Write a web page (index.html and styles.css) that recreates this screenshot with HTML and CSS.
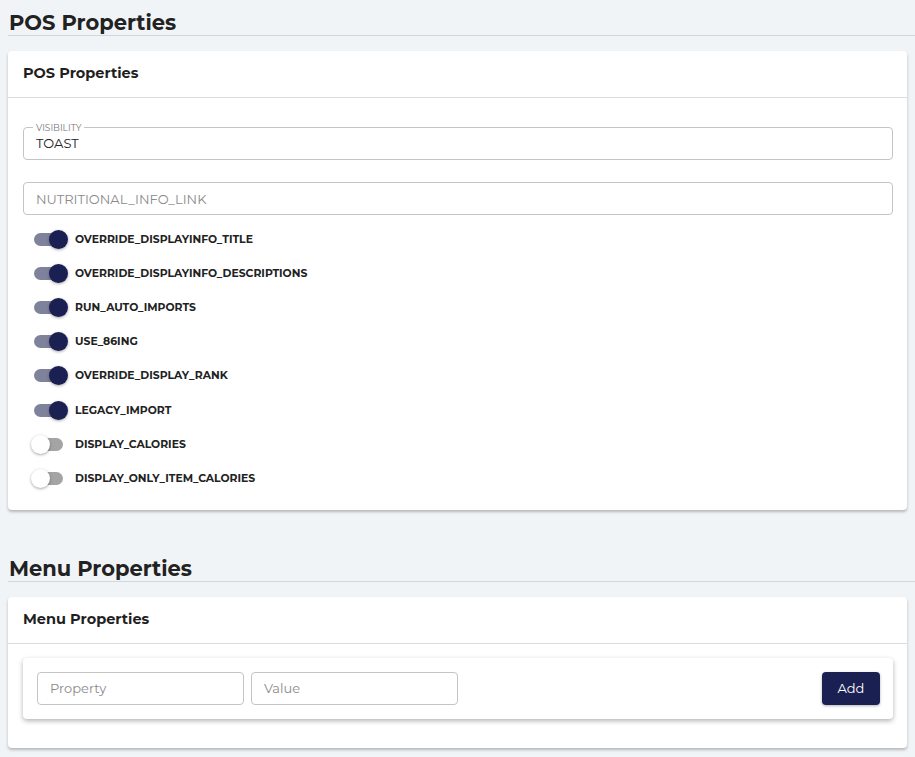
FILE: index.html
```html
<!DOCTYPE html>
<html lang="en">
<head>
  <meta charset="UTF-8">
  <meta name="viewport" content="width=device-width, initial-scale=1.0">
  <title>Properties</title>
  <link rel="stylesheet" href="styles.css">
</head>
<body>
  <!-- POS properties -->
  <section class="section">
    <h2 class="section-title">POS Properties</h2>
    <div class="card">
      <div class="card-header">POS Properties</div>
      <div class="card-body">
        <fieldset class="field">
          <legend>VISIBILITY</legend>
          <input type="text" value="TOAST" readonly>
        </fieldset>
        <div class="field plain">
          <input type="text" placeholder="NUTRITIONAL_INFO_LINK">
        </div>

        <ul class="switch-list">
          <li><span class="switch on"></span>OVERRIDE_DISPLAYINFO_TITLE</li>
          <li><span class="switch on"></span>OVERRIDE_DISPLAYINFO_DESCRIPTIONS</li>
          <li><span class="switch on"></span>RUN_AUTO_IMPORTS</li>
          <li><span class="switch on"></span>USE_86ING</li>
          <li><span class="switch on"></span>OVERRIDE_DISPLAY_RANK</li>
          <li><span class="switch on"></span>LEGACY_IMPORT</li>
          <li><span class="switch"></span>DISPLAY_CALORIES</li>
          <li><span class="switch"></span>DISPLAY_ONLY_ITEM_CALORIES</li>
        </ul>
      </div>
    </div>
  </section>

  <!-- Menu properties -->
  <section class="section">
    <h2 class="section-title">Menu Properties</h2>
    <div class="card">
      <div class="card-header">Menu Properties</div>
      <div class="card-body menu-body">
        <div class="add-row">
          <input class="small-input" type="text" placeholder="Property">
          <input class="small-input" type="text" placeholder="Value">
          <button class="btn-add">Add</button>
        </div>
      </div>
    </div>
  </section>
</body>
</html>
```

FILE: styles.css
```css
body {
  margin: 0;
  padding: 0 0 0 8px;
  background-color: #f1f4f7;
  font-family: Montserrat, "DejaVu Sans", sans-serif;
  color: #1f1f1f;
  overflow: hidden;
}
.section {
  margin-bottom: 36px;
}
.section-title {
  margin: 0;
  padding: 12px 0 1px 1px;
  font-size: 21px;
  font-weight: 700;
  line-height: 22px;
  color: #222;
  border-bottom: 1px solid #d3d7db;
}
.card {
  width: 899px;
  margin-top: 15px;
  background: #fff;
  border-radius: 4px;
  box-shadow: 0 2px 3px rgba(0, 0, 0, 0.25);
}
.card-header {
  padding: 13px 15px 15px;
  font-size: 14.5px;
  font-weight: 700;
  line-height: 18px;
  border-bottom: 1px solid #dcdcdc;
}
.card-body {
  padding: 25px 14px 14px 15px;
}

/* outlined text fields */
.field {
  margin: 0;
  padding: 0 12px;
  height: 37px;
  box-sizing: border-box;
  border: 1px solid #c4c4c4;
  border-radius: 4px;
}
.field legend {
  padding: 0 3px;
  margin-left: -3px;
  font-size: 9px;
  line-height: 9px;
  color: #777;
}
.field input {
  width: 100%;
  border: none;
  outline: none;
  padding: 0;
  font-family: inherit;
  font-size: 13px;
  color: #222;
  background: transparent;
  margin-top: 3px;
}
.field.plain {
  height: 33px;
  margin-top: 22px;
  display: flex;
  align-items: center;
}
.field.plain input {
  margin-top: 0;
}
.field input::placeholder,
.small-input::placeholder {
  color: #8a8a8a;
}

/* switches */
.switch-list {
  list-style: none;
  margin: 7px 0 0;
  padding: 0;
}
.switch-list li {
  display: flex;
  align-items: center;
  height: 34.2px;
  font-size: 10.8px;
  font-weight: 700;
  color: #222;
}
.switch {
  position: relative;
  width: 29px;
  height: 13px;
  margin: 0 12px 0 11px;
  border-radius: 7px;
  background: #a4a4a4;
}
.switch::after {
  content: "";
  position: absolute;
  top: -3px;
  left: -3px;
  width: 19px;
  height: 19px;
  border-radius: 50%;
  background: #fff;
  box-shadow: 0 1px 3px rgba(0, 0, 0, 0.35);
}
.switch.on {
  background: #7f829b;
}
.switch.on::after {
  left: 15px;
  background: #1b2052;
}

/* menu property add row */
.menu-body {
  padding: 14px 14px 29px 15px;
}
.add-row {
  display: flex;
  align-items: center;
  gap: 7px;
  padding: 14px 13px 14px 14px;
  border-radius: 4px;
  box-shadow: 0 2px 5px rgba(0, 0, 0, 0.3);
}
.small-input {
  width: 207px;
  height: 33px;
  box-sizing: border-box;
  padding: 0 12px;
  border: 1px solid #c4c4c4;
  border-radius: 4px;
  font-family: inherit;
  font-size: 13px;
}
.btn-add {
  margin-left: auto;
  width: 58px;
  height: 33px;
  border: none;
  border-radius: 4px;
  background: #1b2052;
  color: #fff;
  font-family: inherit;
  font-size: 13px;
  box-shadow: 0 1px 3px rgba(0, 0, 0, 0.3);
}
```
